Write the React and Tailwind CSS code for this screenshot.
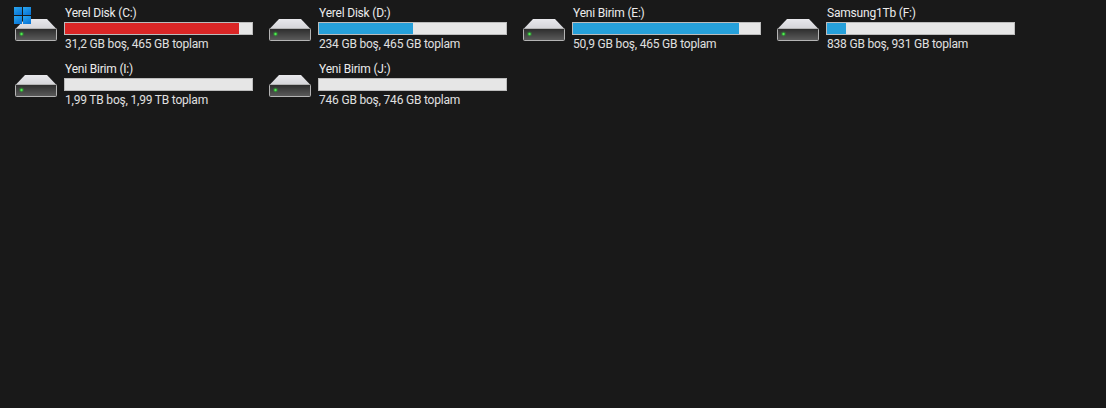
import React from "react";

const drives = [
    { name: "Yerel Disk (C:)", used: 93, info: "31,2 GB boş, 465 GB toplam", full: true },
    { name: "Yerel Disk (D:)", used: 50, info: "234 GB boş, 465 GB toplam" },
    { name: "Yeni Birim (E:)", used: 89, info: "50,9 GB boş, 465 GB toplam" },
    { name: "Samsung1Tb (F:)", used: 10, info: "838 GB boş, 931 GB toplam" },
    { name: "Yeni Birim (I:)", used: 0, info: "1,99 TB boş, 1,99 TB toplam" },
    { name: "Yeni Birim (J:)", used: 0, info: "746 GB boş, 746 GB toplam" },
];

const DriveIcon = ({ id }) => (
    <svg width="44" height="26" viewBox="0 0 44 26" className="shrink-0">
        <defs>
            <linearGradient id={`top-${id}`} x1="0" y1="0" x2="0" y2="1">
                <stop offset="0" stopColor="#e8e8ec" />
                <stop offset="1" stopColor="#d4d4d8" />
            </linearGradient>
            <linearGradient id={`body-${id}`} x1="0" y1="0" x2="0" y2="1">
                <stop offset="0" stopColor="#2c2c2c" />
                <stop offset="1" stopColor="#5c5c5c" />
            </linearGradient>
        </defs>
        <path d="M11 3 L33 3 L42.5 13 L1.5 13 Z" fill={`url(#top-${id})`} />
        <rect x="1.5" y="12.5" width="41" height="12" rx="1" fill={`url(#body-${id})`} stroke="#b4b4b4" strokeWidth="1" />
        <circle cx="7.5" cy="18" r="2.4" fill="#22c52a" opacity="0.35" />
        <circle cx="7.5" cy="18" r="1.2" fill="#4cf04c" />
    </svg>
);

const WindowsLogo = () => (
    <svg width="17" height="17" viewBox="0 0 17 17" className="absolute left-[14px] top-[7px]">
        <defs>
            <linearGradient id="win" x1="0" y1="0" x2="0.6" y2="1">
                <stop offset="0" stopColor="#2ba6ee" />
                <stop offset="1" stopColor="#0a78d8" />
            </linearGradient>
        </defs>
        <rect x="0" y="0" width="8" height="8" fill="url(#win)" />
        <rect x="9" y="0" width="8" height="8" fill="url(#win)" />
        <rect x="0" y="9" width="8" height="8" fill="url(#win)" />
        <rect x="9" y="9" width="8" height="8" fill="url(#win)" />
    </svg>
);

const DriveTile = ({ drive, id }) => (
    <div className="flex h-[56px] items-end gap-[6px]">
        <div className="mb-[14px]">
            <DriveIcon id={id} />
        </div>
        <div className="w-[189px] pb-[5px]">
            <div className="h-[15px] pl-px text-[12px] leading-[17px] tracking-[-0.2px] text-[#ececec]">{drive.name}</div>
            <div className="mt-[2px] h-[13px] w-[189px] border border-[#bcbcbc] bg-[#e6e6e6]">
                <div
                    className={drive.full ? "h-full bg-[#da2626]" : "h-full bg-[#26a0da]"}
                    style={{ width: `${drive.used}%` }}
                ></div>
            </div>
            <div className="mt-px h-[15px] whitespace-nowrap pl-px text-[12px] leading-[17px] tracking-[-0.2px] text-[#e0e0e0]">{drive.info}</div>
        </div>
    </div>
);

const App = () => {
    return (
        <div className="relative h-[408px] w-[1106px] overflow-hidden bg-[#191919] font-['Roboto','Liberation_Sans',sans-serif]">
            <div className="grid grid-cols-[254px_254px_254px_254px] pl-[14px]">
                {drives.map((drive, i) => (
                    <DriveTile key={drive.name} drive={drive} id={i} />
                ))}
            </div>
            <WindowsLogo />
        </div>
    );
};

export default App;
